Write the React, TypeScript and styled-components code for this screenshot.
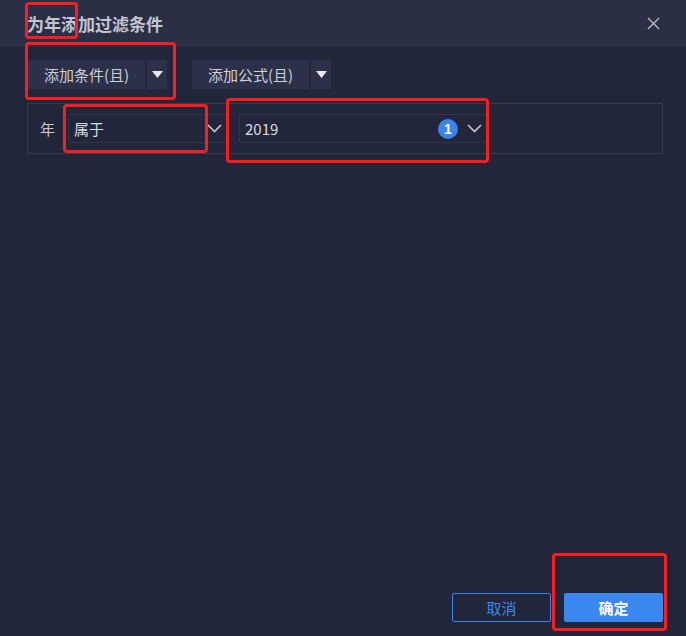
import React from "react"
import styled, { createGlobalStyle } from "styled-components"

const GlobalStyle = createGlobalStyle`
  html, body {
    margin: 0;
    padding: 0;
    background: #22263a;
  }
  * {
    box-sizing: border-box;
  }
`

const FONT = `"Noto Sans CJK SC", "Liberation Sans", "Noto Sans", sans-serif`

type Mark = { left: number; top: number; width: number; height: number }

const marks: Mark[] = [
  { left: 25, top: 2, width: 53, height: 37 },
  { left: 25, top: 42, width: 151, height: 58 },
  { left: 63, top: 104, width: 145, height: 49 },
  { left: 226, top: 98, width: 263, height: 65 },
  { left: 552, top: 553, width: 115, height: 78 },
]

export default function App() {
  return (
    <>
      <GlobalStyle />
      <Dialog>
        <Header>
          <Title>为年添加过滤条件</Title>
          <CloseButton aria-label="close">
            <svg width="13" height="13" viewBox="0 0 13 13">
              <path d="M1 1L12 12M12 1L1 12" stroke="#b9bdca" strokeWidth="1.4" />
            </svg>
          </CloseButton>
        </Header>

        <Body>
          <Toolbar>
            {["添加条件(且)", "添加公式(且)"].map((text) => (
              <SplitButton key={text}>
                <MainPart>{text}</MainPart>
                <ArrowPart>
                  <svg width="11" height="7" viewBox="0 0 11 7">
                    <path d="M0 0H11L5.5 7Z" fill="#e6e8ee" />
                  </svg>
                </ArrowPart>
              </SplitButton>
            ))}
          </Toolbar>

          <FilterRow>
            <FieldLabel>年</FieldLabel>
            <Select $width={160}>
              <SelectText>属于</SelectText>
              <Chevron />
            </Select>
            <Select $width={249}>
              <SelectText>2019</SelectText>
              <Badge>1</Badge>
              <Chevron />
            </Select>
          </FilterRow>
        </Body>

        <Footer>
          <CancelButton>取消</CancelButton>
          <OkButton>确定</OkButton>
        </Footer>

        {marks.map((m, i) => (
          <RedMark
            key={i}
            style={{ left: m.left, top: m.top, width: m.width, height: m.height }}
          />
        ))}
      </Dialog>
    </>
  )
}

function Chevron() {
  return (
    <ChevronBox>
      <svg width="15" height="9" viewBox="0 0 15 9">
        <path d="M1 1L7.5 7.5L14 1" fill="none" stroke="#c3c7d2" strokeWidth="1.6" />
      </svg>
    </ChevronBox>
  )
}

const Dialog = styled.div`
  position: relative;
  width: 686px;
  height: 636px;
  display: flex;
  flex-direction: column;
  background: #22263a;
  font-family: ${FONT};
  overflow: hidden;
`

const Header = styled.div`
  height: 47px;
  flex-shrink: 0;
  display: flex;
  align-items: center;
  justify-content: space-between;
  padding: 0 25px 0 27px;
  background: #2a2f45;
`

const Title = styled.div`
  font-size: 17px;
  font-weight: 700;
  color: #c3c6d1;
`

const CloseButton = styled.div`
  display: flex;
  align-items: center;
  justify-content: center;
  width: 16px;
  height: 16px;
`

const Body = styled.div`
  flex: 1;
  padding: 13px 24px 0 27px;
  display: flex;
  flex-direction: column;
`

const Toolbar = styled.div`
  display: flex;
  gap: 25px;
  padding-left: 1px;
`

const SplitButton = styled.div`
  display: flex;
  gap: 2px;
  height: 29px;
`

const MainPart = styled.div`
  width: 117px;
  display: flex;
  align-items: center;
  justify-content: center;
  background: #2c3149;
  color: #cdd0d9;
  font-size: 15px;
`

const ArrowPart = styled.div`
  width: 20px;
  display: flex;
  align-items: center;
  justify-content: center;
  background: #2c3149;
`

const FilterRow = styled.div`
  margin-top: 14px;
  width: 636px;
  height: 51px;
  border: 1px solid #353a51;
  display: flex;
  align-items: center;
  padding-left: 12px;
  gap: 13px;
`

const FieldLabel = styled.span`
  color: #c8cbd4;
  font-size: 15px;
  width: 15px;
`

const Select = styled.div<{ $width: number }>`
  width: ${(p) => p.$width}px;
  height: 29px;
  border: 1px solid #30354b;
  border-radius: 2px;
  display: flex;
  align-items: center;
  padding-left: 5px;
  padding-right: 5px;
  & + & {
    margin-left: -2px;
  }
`

const SelectText = styled.span`
  flex: 1;
  color: #dadce3;
  font-size: 15px;
`

const Badge = styled.span`
  width: 20px;
  height: 20px;
  border-radius: 50%;
  background: #3b84ea;
  color: #ffffff;
  font-family: "Liberation Sans", sans-serif;
  font-weight: 700;
  font-size: 14px;
  display: flex;
  align-items: center;
  justify-content: center;
  margin-right: 8px;
`

const ChevronBox = styled.span`
  display: flex;
  align-items: center;
  justify-content: center;
  width: 16px;
  height: 16px;
`

const Footer = styled.div`
  display: flex;
  justify-content: flex-end;
  gap: 13px;
  padding: 0 23px 14px 0;
`

const BaseButton = styled.div`
  width: 99px;
  height: 29px;
  border-radius: 2px;
  display: flex;
  align-items: center;
  justify-content: center;
  font-size: 15px;
`

const CancelButton = styled(BaseButton)`
  border: 1px solid #3a82e6;
  color: #3d86ec;
`

const OkButton = styled(BaseButton)`
  background: #3a87ee;
  color: #ffffff;
  font-weight: 700;
`

const RedMark = styled.div`
  position: absolute;
  border: 3px solid #fb1d1d;
  border-radius: 4px;
  pointer-events: none;
`
